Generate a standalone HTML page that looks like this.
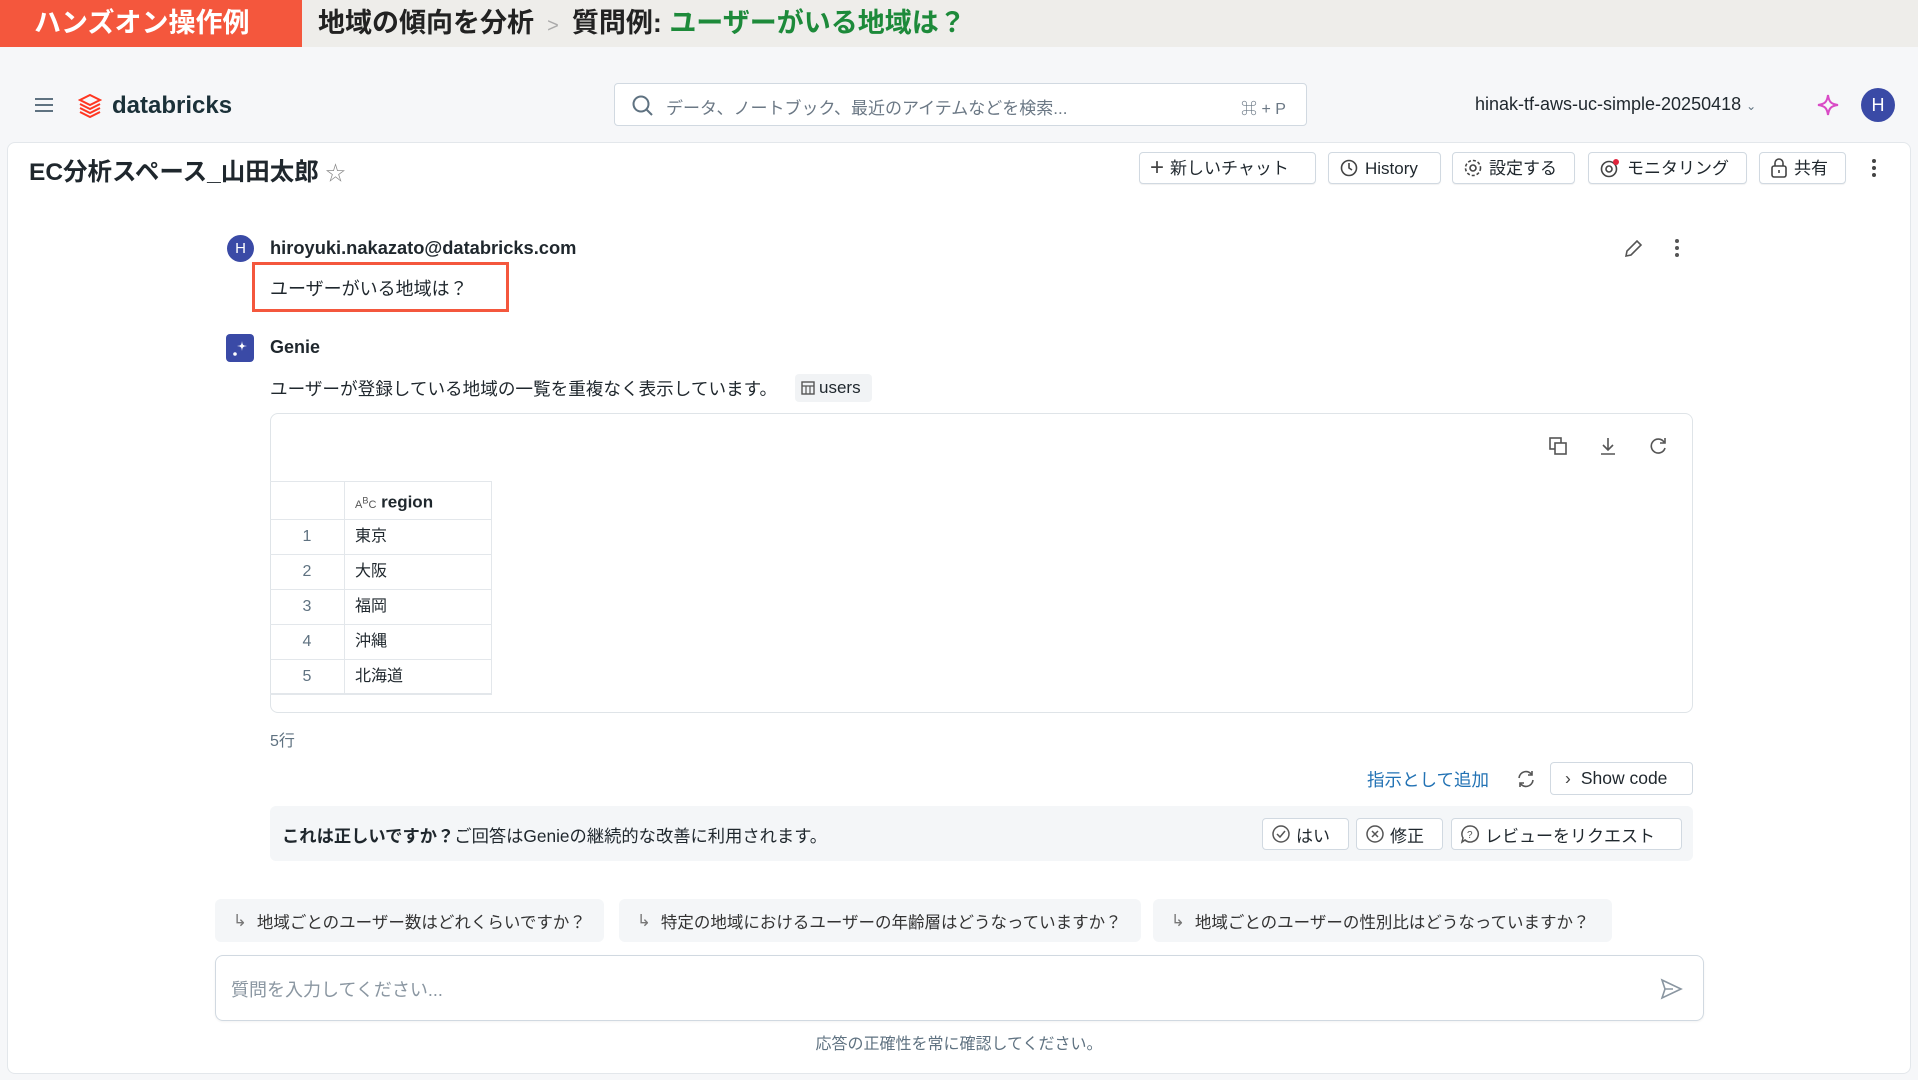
<!DOCTYPE html>
<html><head><meta charset="utf-8"><style>
*{box-sizing:border-box;margin:0;padding:0}
body{width:1918px;height:1080px;overflow:hidden;background:#f6f7f9;font-family:"Liberation Sans","Noto Sans CJK JP",sans-serif;color:#1f272d;position:relative}
.a{position:absolute}
.btn{position:absolute;top:152px;height:32px;border:1px solid #d1d9e1;border-radius:4px;background:#fff;font-size:17px;display:flex;align-items:center;gap:6px;padding:0 10px;box-shadow:0 1px 1px rgba(0,0,0,.06);line-height:1}
svg{display:block}
.row{position:absolute;left:270px;width:222px;height:35px;border-bottom:1px solid #e3e7eb;font-size:16px;line-height:34px}
.row .i{position:absolute;left:0;width:74px;text-align:center;top:0;color:#5f7281}
.row .v{position:absolute;left:85px;top:0}
.chip{position:absolute;top:899px;height:43px;background:#f4f6f8;border-radius:6px;font-size:16.5px;color:#333;display:flex;align-items:center;gap:10px;padding-left:18px}
.fb{position:absolute;top:818px;height:32px;border:1px solid #d1d9e1;border-radius:4px;background:#fff;font-size:17px;display:flex;align-items:center;gap:5px;padding:0 8px}
</style></head><body>
<div class="a" style="left:0;top:0;width:1918px;height:47px;background:#eeedea"></div>
<div class="a" style="left:0;top:0;width:302px;height:47px;background:#f4573d;color:#fff;font-size:27px;font-weight:bold;line-height:47px;padding-left:34px">ハンズオン操作例</div>
<div class="a" style="left:318px;top:0;line-height:47px;font-size:27px;font-weight:bold;color:#222">地域の傾向を分析 <span style="color:#aaa;font-weight:normal;font-size:20px">&nbsp;&gt;&nbsp;</span> 質問例: <span style="color:#1d8a3a">ユーザーがいる地域は？</span></div>

<div class="a" style="left:34px;top:96px"><svg width="20" height="18"><path d="M1 3h18M1 9h18M1 15h18" stroke="#5f7281" stroke-width="2"/></svg></div>
<div class="a" style="left:78px;top:93px"><svg width="24" height="25" viewBox="0 0 24 25"><path d="M12 2 22 7 12 12 2 7Z M2 11l10 5 10-5 M2 15l10 5 10-5 M2 19l10 5 10-5" fill="none" stroke="#ff3621" stroke-width="2"/></svg></div>
<div class="a" style="left:112px;top:92px;font-size:24px;font-weight:bold;color:#1b3139">databricks</div>
<div class="a" style="left:614px;top:83px;width:693px;height:43px;background:#fff;border:1px solid #d1d9e1;border-radius:4px"></div>
<div class="a" style="left:632px;top:95px"><svg width="22" height="22"><circle cx="9" cy="9" r="7.5" fill="none" stroke="#5f7281" stroke-width="2"/><path d="M14.5 14.5 20 20" stroke="#5f7281" stroke-width="2"/></svg></div>
<div class="a" style="left:666px;top:94px;font-size:17px;color:#6b7885">データ、ノートブック、最近のアイテムなどを検索...</div>
<div class="a" style="left:1241px;top:95px;font-size:16px;color:#6b7885">⌘ + P</div>
<div class="a" style="left:1475px;top:94px;font-size:18px;color:#1f272d">hinak-tf-aws-uc-simple-20250418 <span style="font-size:12px;color:#5f7281">⌄</span></div>
<div class="a" style="left:1816px;top:93px"><svg width="24" height="24"><path d="M12 2C13 9 15 11 22 12 15 13 13 15 12 22 11 15 9 13 2 12 9 11 11 9 12 2Z" fill="none" stroke="#d94bc6" stroke-width="2"/></svg></div>
<div class="a" style="left:1861px;top:88px;width:34px;height:34px;border-radius:50%;background:#3a4aa6;color:#fff;font-size:18px;text-align:center;line-height:34px">H</div>

<div class="a" style="left:7px;top:142px;width:1904px;height:932px;background:#fff;border:1px solid #e3e7eb;border-radius:8px"></div>
<div class="a" style="left:29px;top:153px;font-size:24.5px;font-weight:bold">EC分析スペース_山田太郎 <span style="font-weight:normal;color:#888;font-size:20px">☆</span></div>

<div class="btn" style="left:1139px;width:177px"><span style="font-size:24px;color:#444">+</span>新しいチャット</div>
<div class="btn" style="left:1328px;width:113px"><svg width="20" height="20"><circle cx="10" cy="10" r="7.5" fill="none" stroke="#444" stroke-width="1.6"/><path d="M10 5v5l3 2" fill="none" stroke="#444" stroke-width="1.6"/></svg>History</div>
<div class="btn" style="left:1452px;width:123px"><svg width="20" height="20"><circle cx="10" cy="10" r="3" fill="none" stroke="#444" stroke-width="1.6"/><circle cx="10" cy="10" r="7.5" fill="none" stroke="#444" stroke-width="1.6" stroke-dasharray="3 2"/></svg>設定する</div>
<div class="btn" style="left:1588px;width:159px"><svg width="22" height="20"><circle cx="10" cy="11" r="7.5" fill="none" stroke="#444" stroke-width="1.6"/><circle cx="10" cy="11" r="3" fill="none" stroke="#444" stroke-width="1.6"/><circle cx="17" cy="4" r="3" fill="#e0243c"/></svg>モニタリング</div>
<div class="btn" style="left:1759px;width:87px"><svg width="18" height="22"><rect x="2" y="9" width="14" height="11" rx="2" fill="none" stroke="#444" stroke-width="1.6"/><path d="M5 9V6a4 4 0 0 1 8 0v3M9 13v3" fill="none" stroke="#444" stroke-width="1.6"/></svg>共有</div>
<div class="a" style="left:1870px;top:158px"><svg width="8" height="20"><circle cx="4" cy="3" r="2" fill="#444"/><circle cx="4" cy="10" r="2" fill="#444"/><circle cx="4" cy="17" r="2" fill="#444"/></svg></div>

<div class="a" style="left:227px;top:235px;width:27px;height:27px;border-radius:50%;background:#3a4aa6;color:#fff;font-size:15px;text-align:center;line-height:27px">H</div>
<div class="a" style="left:270px;top:237px;font-size:18.3px;font-weight:bold">hiroyuki.nakazato@databricks.com</div>
<div class="a" style="left:1622px;top:238px"><svg width="22" height="22"><path d="M4 18l1-5L15 3l4 4L9 17Z" fill="none" stroke="#555" stroke-width="1.6"/></svg></div>
<div class="a" style="left:1673px;top:238px"><svg width="8" height="20"><circle cx="4" cy="3" r="2" fill="#555"/><circle cx="4" cy="10" r="2" fill="#555"/><circle cx="4" cy="17" r="2" fill="#555"/></svg></div>
<div class="a" style="left:252px;top:262px;width:257px;height:50px;border:3px solid #f4573d"></div>
<div class="a" style="left:270px;top:275px;font-size:18px">ユーザーがいる地域は？</div>

<div class="a" style="left:226px;top:334px;width:28px;height:28px;border-radius:4px;background:#3a4aa6"><svg width="28" height="28"><path d="M16 7C16.5 11 17 11.5 21 12 17 12.5 16.5 13 16 17 15.5 13 15 12.5 11 12 15 11.5 15.5 11 16 7Z" fill="#fff"/><circle cx="9" cy="20" r="1.8" fill="#fff"/></svg></div>
<div class="a" style="left:270px;top:337px;font-size:18px;font-weight:bold">Genie</div>
<div class="a" style="left:270px;top:376px;font-size:17.6px">ユーザーが登録している地域の一覧を重複なく表示しています。</div>
<div class="a" style="left:795px;top:374px;width:77px;height:28px;background:#f1f3f5;border-radius:4px;font-size:17px;display:flex;align-items:center;gap:4px;padding-left:6px"><svg width="14" height="14"><rect x="1" y="1" width="12" height="12" fill="none" stroke="#555" stroke-width="1.4"/><path d="M1 5h12M5 5v8M9 5v8" stroke="#555" stroke-width="1.2"/></svg>users</div>

<div class="a" style="left:270px;top:413px;width:1423px;height:300px;border:1px solid #dfe4e8;border-radius:8px"></div>
<div class="a" style="left:1548px;top:436px"><svg width="20" height="20"><rect x="2" y="2" width="11" height="11" fill="none" stroke="#555" stroke-width="1.6"/><rect x="7" y="7" width="11" height="11" fill="#fff" stroke="#555" stroke-width="1.6"/></svg></div>
<div class="a" style="left:1598px;top:436px"><svg width="20" height="20"><path d="M10 2v11M5 9l5 5 5-5M3 18h14" fill="none" stroke="#555" stroke-width="1.6"/></svg></div>
<div class="a" style="left:1648px;top:436px"><svg width="20" height="20"><path d="M16 6A7 7 0 1 0 17 12M17 2v5h-5" fill="none" stroke="#555" stroke-width="1.6"/></svg></div>

<div class="a" style="left:270px;top:481px;width:222px;height:213px;border:1px solid #e3e7eb;border-left:none"></div>
<div class="a" style="left:344px;top:481px;width:1px;height:213px;background:#e3e7eb"></div>
<div class="row" style="top:481px;height:39px;border-top:1px solid #e3e7eb;line-height:37px"><div class="v" style="font-weight:bold;font-size:17px"><span style="font-size:11px;font-weight:normal;color:#555">A<sup>B</sup>C</span> region</div></div>
<div class="row" style="top:520px"><div class="i">1</div><div class="v">東京</div></div>
<div class="row" style="top:555px"><div class="i">2</div><div class="v">大阪</div></div>
<div class="row" style="top:590px"><div class="i">3</div><div class="v">福岡</div></div>
<div class="row" style="top:625px"><div class="i">4</div><div class="v">沖縄</div></div>
<div class="row" style="top:660px"><div class="i">5</div><div class="v">北海道</div></div>
<div class="a" style="left:270px;top:727px;font-size:16px;color:#5f7281">5行</div>

<div class="a" style="left:1367px;top:767px;font-size:17.5px;color:#2272b4">指示として追加</div>
<div class="a" style="left:1516px;top:769px"><svg width="20" height="20"><path d="M3 9a7 7 0 0 1 13-3M17 11a7 7 0 0 1-13 3M16 2v4h-4M4 18v-4h4" fill="none" stroke="#555" stroke-width="1.6"/></svg></div>
<div class="a" style="left:1550px;top:762px;width:143px;height:33px;border:1px solid #d1d9e1;border-radius:4px;font-size:17.5px;display:flex;align-items:center;padding-left:14px;gap:10px"><span style="color:#444">›</span>Show code</div>

<div class="a" style="left:270px;top:806px;width:1423px;height:55px;background:#f4f6f8;border-radius:6px"></div>
<div class="a" style="left:282px;top:822px;font-size:17.3px"><b>これは正しいですか？</b>ご回答はGenieの継続的な改善に利用されます。</div>
<div class="fb" style="left:1262px;width:87px"><svg width="20" height="20"><circle cx="10" cy="10" r="8" fill="none" stroke="#555" stroke-width="1.5"/><path d="M6 10l3 3 5-6" fill="none" stroke="#555" stroke-width="1.5"/></svg>はい</div>
<div class="fb" style="left:1356px;width:87px"><svg width="20" height="20"><circle cx="10" cy="10" r="8" fill="none" stroke="#555" stroke-width="1.5"/><path d="M7 7l6 6M13 7l-6 6" stroke="#555" stroke-width="1.5"/></svg>修正</div>
<div class="fb" style="left:1451px;width:231px"><svg width="20" height="20"><path d="M10 2a8 8 0 1 1-5 14l-3 2 1-4A8 8 0 0 1 10 2Z" fill="none" stroke="#555" stroke-width="1.5"/><text x="7" y="14" font-size="10" fill="#555">?</text></svg>レビューをリクエスト</div>

<div class="chip" style="left:215px;width:389px"><span style="color:#777">↳</span>地域ごとのユーザー数はどれくらいですか？</div>
<div class="chip" style="left:619px;width:522px"><span style="color:#777">↳</span>特定の地域におけるユーザーの年齢層はどうなっていますか？</div>
<div class="chip" style="left:1153px;width:459px"><span style="color:#777">↳</span>地域ごとのユーザーの性別比はどうなっていますか？</div>

<div class="a" style="left:215px;top:955px;width:1489px;height:66px;border:1px solid #d1d9e1;border-radius:8px;box-shadow:0 1px 2px rgba(0,0,0,.05)"></div>
<div class="a" style="left:231px;top:976px;font-size:18px;color:#8a96a1">質問を入力してください...</div>
<div class="a" style="left:1659px;top:978px"><svg width="24" height="22"><path d="M3 2l19 9-19 9 3-9Z M6 11h8" fill="none" stroke="#8a96a1" stroke-width="1.6"/></svg></div>
<div class="a" style="left:0;width:1918px;top:1030px;text-align:center;font-size:16px;color:#5f7281">応答の正確性を常に確認してください。</div>
</body></html>
